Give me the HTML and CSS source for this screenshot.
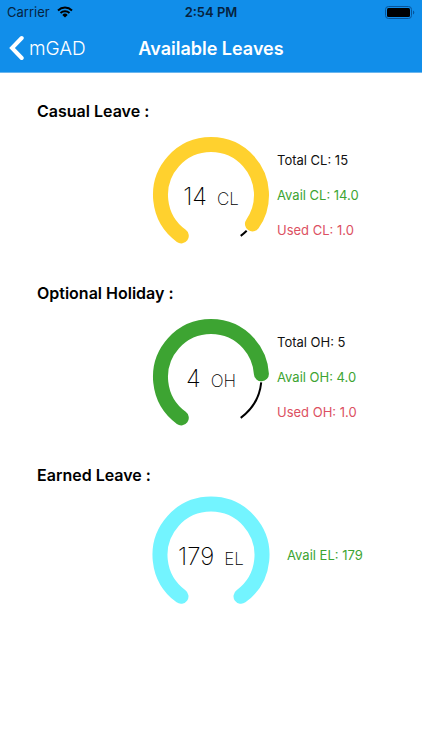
FILE: index.html
```html
<!DOCTYPE html>
<html lang="en">
<head>
<meta charset="utf-8">
<meta name="viewport" content="width=device-width, initial-scale=1">
<title>Available Leaves</title>
<link rel="stylesheet" href="styles.css">
</head>
<body>
<header class="header">
  <div class="status">
    <div class="carrier">
      <span>Carrier</span>
      <svg class="wifi" viewBox="0 0 16 12" width="16" height="12" aria-hidden="true">
        <path d="M1 4.4a10.2 10.2 0 0 1 14 0M3.5 7a6.7 6.7 0 0 1 9 0" fill="none" stroke="currentColor" stroke-width="2"/>
        <path d="M8 11.6 5.3 8.9a3.9 3.9 0 0 1 5.4 0z" fill="currentColor"/>
      </svg>
    </div>
    <time class="clock">2:54 PM</time>
    <svg class="battery" viewBox="0 0 30 13" width="30" height="13" aria-hidden="true">
      <rect x="0.5" y="0.5" width="26" height="12" rx="3" fill="none" stroke="#07549a"/>
      <rect x="2" y="2" width="23" height="9" rx="1.5" fill="#000"/>
      <path d="M28 4.5v4a2.2 2.2 0 0 0 0-4z" fill="#07549a"/>
    </svg>
  </div>
  <nav class="nav">
    <a class="back" href="#">
      <svg viewBox="0 0 15 26" width="15" height="26" aria-hidden="true"><path d="M12.7 3 3 13l9.7 10" fill="none" stroke="currentColor" stroke-width="4" stroke-linecap="round" stroke-linejoin="miter"/></svg>
      <span>mGAD</span>
    </a>
    <h1 class="title">Available Leaves</h1>
  </nav>
</header>
<main class="content">
  <section class="leave">
    <h2 class="name">Casual Leave :</h2>
    <div class="row">
      <div class="gauge">
        <svg viewBox="0 0 120 120" aria-hidden="true">
          <path class="track" pathLength="288" stroke-dasharray="0 279 9" d="M30.3 100.9A50.5 50.5 0 1 1 89.7 100.9"/>
          <path class="arc casual" pathLength="288" stroke-dasharray="268.8 400" d="M30.3 100.9A50.5 50.5 0 1 1 89.7 100.9"/>
        </svg>
        <p class="value">14 <small>CL</small></p>
      </div>
      <ul class="figures">
        <li>Total CL: 15</li>
        <li class="avail">Avail CL: 14.0</li>
        <li class="used">Used CL: 1.0</li>
      </ul>
    </div>
  </section>
  <section class="leave">
    <h2 class="name">Optional Holiday :</h2>
    <div class="row">
      <div class="gauge">
        <svg viewBox="0 0 120 120" aria-hidden="true">
          <path class="track" pathLength="288" stroke-dasharray="0 240 48" d="M30.3 100.9A50.5 50.5 0 1 1 89.7 100.9"/>
          <path class="arc optional" pathLength="288" stroke-dasharray="230.4 400" d="M30.3 100.9A50.5 50.5 0 1 1 89.7 100.9"/>
        </svg>
        <p class="value">4 <small>OH</small></p>
      </div>
      <ul class="figures">
        <li>Total OH: 5</li>
        <li class="avail">Avail OH: 4.0</li>
        <li class="used">Used OH: 1.0</li>
      </ul>
    </div>
  </section>
  <section class="leave summary">
    <h2 class="name">Earned Leave :</h2>
    <div class="row">
      <div class="gauge">
        <svg viewBox="0 0 120 120" aria-hidden="true">
          <path class="arc earned" d="M30 101.3A51 51 0 1 1 90 101.3"/>
        </svg>
        <p class="value">179 <small>EL</small></p>
      </div>
      <ul class="figures">
        <li class="avail">Avail EL: 179</li>
      </ul>
    </div>
  </section>
</main>
</body>
</html>
```
FILE: styles.css
```css
* {
  box-sizing: border-box;
}

body,
h1,
h2,
p,
ul {
  margin: 0;
  padding: 0;
}

body {
  background: #fff;
  color: #111;
  font-family: Inter, "Liberation Sans", sans-serif;
}

.header {
  background: #118eea;
  border-bottom: 1px solid #6bb6ee;
}

.status {
  display: grid;
  grid-template-columns: 1fr auto 1fr;
  align-items: center;
  height: 24px;
  padding: 0 7px;
  color: #06233f;
  font-size: 13px;
}

.carrier {
  display: flex;
  align-items: center;
  gap: 7px;
}

.wifi {
  color: #000;
}

.clock {
  font-weight: 600;
}

.battery {
  justify-self: end;
}

.nav {
  display: grid;
  grid-template-columns: 1fr auto 1fr;
  align-items: center;
  height: 48px;
  padding: 0 9px;
  color: #fff;
}

.back {
  display: flex;
  align-items: center;
  gap: 5px;
  color: inherit;
  font-size: 19px;
  font-weight: 300;
  text-decoration: none;
}

.title {
  font-size: 18px;
  font-weight: 600;
}

.content {
  display: grid;
  gap: 28px;
  padding: 28px 0;
}

.leave {
  display: grid;
  gap: 14px;
}

.name {
  padding-left: 37px;
  color: #000;
  font-size: 16px;
  font-weight: 600;
  line-height: 20px;
}

.row {
  display: grid;
  grid-template-columns: 1fr 120px 1fr;
  align-items: center;
  column-gap: 6px;
}

.gauge {
  display: grid;
  grid-column: 2;
  place-items: center;
}

.gauge > * {
  grid-area: 1 / 1;
}

.gauge svg {
  display: block;
  width: 120px;
  height: 120px;
}

.track {
  fill: none;
  stroke: #000;
  stroke-width: 2;
}

.arc {
  fill: none;
  stroke-width: 15;
  stroke-linecap: round;
}

.casual {
  stroke: #ffd12e;
}

.optional {
  stroke: #3da432;
}

.earned {
  stroke: #73f4ff;
}

.value {
  display: flex;
  align-items: baseline;
  gap: 10px;
  padding-top: 2px;
  color: #000;
  font-size: 24px;
  font-weight: 200;
  white-space: nowrap;
}

.value small {
  font-size: 17px;
}

.figures {
  list-style: none;
  font-size: 13px;
  line-height: 35px;
  white-space: nowrap;
}

.avail {
  color: #3da432;
}

.used {
  color: #dc5062;
}

.summary {
  gap: 10px;
}

.summary .figures {
  padding-left: 10px;
}
```
